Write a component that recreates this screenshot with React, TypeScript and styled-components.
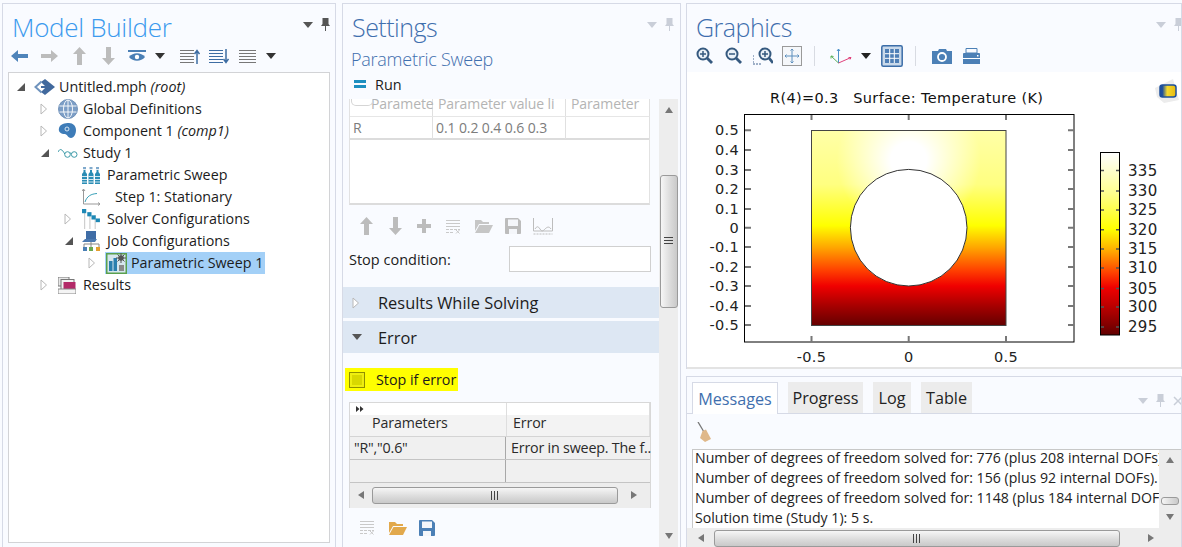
import React from "react";
import styled, { createGlobalStyle } from "styled-components";

const UI_FONT = `"Open Sans", "Noto Sans", "Liberation Sans", sans-serif`;
const PLOT_FONT = `"DejaVu Sans", sans-serif`;

const GlobalStyle = createGlobalStyle`
  html, body {
    margin: 0;
    padding: 0;
    width: 1182px;
    height: 547px;
    overflow: hidden;
    background: #f9fbff;
    font-family: ${UI_FONT};
  }
`;

const Page = styled.div`
  display: flex;
  width: 1182px;
  height: 547px;
  padding: 3px 0 0 2px;
  box-sizing: border-box;
  gap: 6px;
  overflow: hidden;
`;

const Panel = styled.section<{ $width: number }>`
  position: relative;
  width: ${(p) => p.$width}px;
  flex: none;
  display: flex;
  flex-direction: column;
  box-sizing: border-box;
  border: 1px solid #d6dae6;
  border-bottom: none;
  overflow: hidden;
`;

const RightColumn = styled.div`
  flex: 1;
  min-width: 0;
  margin-left: -1px;
  display: flex;
  flex-direction: column;
  gap: 7px;
`;

const Title = styled.h1<{ $active?: boolean }>`
  margin: 0;
  padding: 5px 0 0 9px;
  height: 36px;
  box-sizing: border-box;
  font-size: ${(p) => (p.$active ? 26 : 25)}px;
  line-height: 36px;
  font-weight: 300;
  letter-spacing: ${(p) => (p.$active ? -0.3 : -0.5)}px;
  white-space: nowrap;
  color: ${(p) => (p.$active ? "#3b9aee" : "#3f6fae")};
`;

const Corner = styled.div<{ $right: number; $top?: number }>`
  position: absolute;
  top: ${(p) => p.$top ?? 14}px;
  right: ${(p) => p.$right}px;
  display: flex;
  gap: 8px;
  align-items: center;
`;

const Toolbar = styled.div<{ $pad: number; $height?: number; $mt?: number }>`
  display: flex;
  align-items: center;
  height: ${(p) => p.$height ?? 24}px;
  margin-top: ${(p) => p.$mt ?? 0}px;
  padding-left: ${(p) => p.$pad}px;
  flex: none;
`;

const Tool = styled.span<{ $ml?: number }>`
  display: inline-flex;
  align-items: center;
  margin-left: ${(p) => p.$ml ?? 0}px;
`;

const Divider = styled.span<{ $ml: number }>`
  width: 1px;
  height: 20px;
  margin-left: ${(p) => p.$ml}px;
  background: #d8dbe2;
`;

const TreeBox = styled.div`
  margin: 0 5px;
  height: 471px;
  box-sizing: border-box;
  border: 1px solid #d2d3d6;
  background: #fff;
  padding-top: 3px;
`;

const TreeRow = styled.div<{ $level: number }>`
  display: flex;
  align-items: center;
  height: 22px;
  padding-left: ${(p) => 7 + p.$level * 24}px;
`;

const Expander = styled.span`
  width: 18px;
  flex: none;
  display: inline-flex;
  align-items: center;
`;

const NodeIcon = styled.span`
  width: 25px;
  flex: none;
  display: inline-flex;
  align-items: center;
`;

const NodeLabel = styled.span<{ $indent?: number }>`
  font-size: 14.3px;
  line-height: 22px;
  color: #1c1c1c;
  white-space: nowrap;
  margin-left: ${(p) => p.$indent ?? 0}px;
  em { font-style: italic; }
`;

const SelectedNode = styled.span`
  display: inline-flex;
  align-items: center;
  height: 22px;
  margin-left: -1px;
  padding-left: 1px;
  padding-right: 2px;
  background: #a3d0f7;
`;

const SubTitle = styled.div`
  font-size: 18px;
  line-height: 24px;
  letter-spacing: -0.25px;
  font-weight: 300;
  color: #3f6fae;
  padding-left: 8px;
  margin-top: 7px;
`;

const RunRow = styled.div`
  display: flex;
  align-items: center;
  gap: 9px;
  padding-left: 11px;
  height: 26px;
  font-size: 14.4px;
  color: #1c1c1c;
`;

const SettingsBody = styled.div`
  display: flex;
  flex: 1;
  min-height: 0;
  margin-top: 2px;
`;

const SettingsContent = styled.div`
  width: 316px;
  flex: none;
`;

const VScroll = styled.div<{ $width: number }>`
  width: ${(p) => p.$width}px;
  flex: none;
  background: #ededed;
  display: flex;
  flex-direction: column;
  align-items: center;
`;

const ScrollArrow = styled.span<{ $flex?: boolean; $h?: number; $w?: number }>`
  display: flex;
  align-items: center;
  justify-content: center;
  flex: ${(p) => (p.$flex ? 1 : "none")};
  height: ${(p) => (p.$h ? `${p.$h}px` : "auto")};
  width: ${(p) => (p.$w ? `${p.$w}px` : "100%")};
`;

const VThumb = styled.div<{ $h: number; $w: number; $mt: number }>`
  height: ${(p) => p.$h}px;
  width: ${(p) => p.$w}px;
  margin-top: ${(p) => p.$mt}px;
  flex: none;
  box-sizing: border-box;
  border: 1px solid #9a9a9a;
  border-radius: 3px;
  background: linear-gradient(to right, #f6f6f6, #dcdcdc 55%, #c9c9c9);
  display: flex;
  align-items: center;
  justify-content: center;
`;

const HScrollBar = styled.div<{ $height: number }>`
  display: flex;
  align-items: center;
  height: ${(p) => p.$height}px;
  background: #ededed;
  flex: none;
`;

const HThumb = styled.div<{ $w: number; $h: number }>`
  width: ${(p) => p.$w}px;
  height: ${(p) => p.$h}px;
  flex: none;
  box-sizing: border-box;
  border: 1px solid #9a9a9a;
  border-radius: 3px;
  background: linear-gradient(to bottom, #f6f6f6, #dcdcdc 55%, #c9c9c9);
  display: flex;
  align-items: center;
  justify-content: center;
`;

const Grip = styled.span<{ $vertical?: boolean }>`
  display: block;
  width: 9px;
  height: 9px;
  background: ${(p) =>
    p.$vertical
      ? "repeating-linear-gradient(to bottom, #444 0 1px, transparent 1px 3px)"
      : "repeating-linear-gradient(to right, #444 0 1px, transparent 1px 3px)"};
`;

const SweepTable = styled.div`
  position: relative;
  width: 301px;
  height: 106px;
  margin-left: 6px;
  box-sizing: border-box;
  border-left: 1px solid #e2e2e2;
  border-right: 1px solid #e2e2e2;
  border-bottom: 2px solid #dcdcdc;
  background: #fff;
`;

const SweepRow = styled.div<{ $head?: boolean }>`
  display: grid;
  grid-template-columns: 83px 133px 84px;
  height: ${(p) => (p.$head ? 18 : 23)}px;
  box-sizing: border-box;
  border-bottom: ${(p) => (p.$head ? "1px solid #e6e6e6" : "2px solid #dcdcdc")};
`;

const SweepCell = styled.div<{ $head?: boolean; $pad?: number }>`
  white-space: nowrap;
  box-sizing: border-box;
  border-right: 1px solid #e0e0e0;
  padding-left: ${(p) => p.$pad ?? (p.$head ? 5 : 3)}px;
  font-size: 14px;
  line-height: ${(p) => (p.$head ? 10 : 22)}px;
  letter-spacing: -0.1px;
  color: ${(p) => (p.$head ? "#b4b4b4" : "#7c7c7c")};
`;

const CutHeaderButton = styled.span`
  position: absolute;
  left: 1px;
  top: 0;
  width: 20px;
  height: 6px;
  border: 1px solid #d5d5d5;
  border-top: none;
  border-radius: 0 0 5px 5px;
  background: #fff;
`;

const StopRow = styled.div`
  display: flex;
  align-items: center;
  justify-content: space-between;
  margin: 8px 8px 0 6px;
  height: 26px;
  font-size: 14.5px;
  color: #1c1c1c;
`;

const StopInput = styled.div`
  width: 142px;
  height: 26px;
  box-sizing: border-box;
  border: 1px solid #d0d0d0;
  background: #fff;
`;

const SectionBar = styled.div<{ $mt: number; $h: number }>`
  display: flex;
  align-items: center;
  height: ${(p) => p.$h}px;
  margin-top: ${(p) => p.$mt}px;
  padding-left: 9px;
  background: #dde7f3;
  font-size: 16.4px;
  color: #1c1c1c;
`;

const SectionLabel = styled.span<{ $ml: number }>`
  margin-left: ${(p) => p.$ml}px;
`;

const Highlight = styled.label`
  display: inline-flex;
  align-items: center;
  gap: 11px;
  width: 113px;
  height: 23px;
  margin: 15px 0 0 2px;
  padding-left: 4px;
  box-sizing: border-box;
  background: #ffff00;
  font-size: 14.3px;
  white-space: nowrap;
  color: #1c1c1c;
`;

const CheckBox = styled.span`
  flex: none;
  width: 16px;
  height: 16px;
  box-sizing: border-box;
  border: 1px solid #8f8f00;
  background: #d8d800;
  box-shadow: inset 0 0 0 2px #eeee10;
`;

const ErrorTable = styled.div`
  width: 302px;
  margin: 9px 0 0 6px;
  box-sizing: border-box;
  border: 1px solid #d8d8d8;
  border-bottom: none;
`;

const ErrorHead = styled.div`
  display: grid;
  grid-template-columns: 157px 1fr;
  height: 34px;
  box-sizing: border-box;
  background: linear-gradient(to bottom, #fff 0 12px, #f3f3f3 12px);
  border-bottom: 1px solid #d4d4d4;
  position: relative;
`;

const ExpandMark = styled.span`
  position: absolute;
  left: 6px;
  top: 3px;
  display: inline-flex;
`;

const ErrorHeadCell = styled.div<{ $pad: number }>`
  padding: 10px 0 0 ${(p) => p.$pad}px;
  font-size: 14.2px;
  line-height: 20px;
  letter-spacing: -0.1px;
  color: #2a2a2a;
  border-right: 1px solid #dedede;
`;

const ErrorRow = styled.div`
  display: grid;
  grid-template-columns: 156px 1fr;
  height: 23px;
  box-sizing: border-box;
  background: #f0f0f0;
  border-bottom: 1px solid #c4c4c4;
`;

const ErrorCell = styled.div<{ $first?: boolean }>`
  white-space: nowrap;
  padding-left: ${(p) => (p.$first ? 4 : 5)}px;
  border-right: ${(p) => (p.$first ? "1px solid #a8a8a8" : "none")};
  font-size: 14.3px;
  line-height: 22px;
  letter-spacing: -0.2px;
  color: #2a2a2a;
`;

const GraphicsPanel = styled(Panel)`
  height: 366px;
  flex: none;
  width: 100%;
`;

const PlotArea = styled.div`
  flex: 1;
  background: #fff;
  border-bottom: 2px solid #e3e3e3;
`;

const PlotSvg = styled.svg`
  display: block;
  font-family: ${PLOT_FONT};
`;

const MessagesPanel = styled(Panel)`
  flex: 1;
  width: 100%;
`;

const TabStrip = styled.div`
  display: flex;
  gap: 10px;
  height: 37px;
  box-sizing: border-box;
  padding: 5px 0 0 5px;
  border-bottom: 1px solid #d6dae6;
  flex: none;
`;

const Tab = styled.div<{ $active?: boolean; $width: number }>`
  width: ${(p) => p.$width}px;
  height: ${(p) => (p.$active ? 32 : 31)}px;
  box-sizing: border-box;
  text-align: center;
  font-size: 16.2px;
  line-height: 32px;
  background: ${(p) => (p.$active ? "#fff" : "#ececec")};
  color: ${(p) => (p.$active ? "#3f6fae" : "#222")};
  border: ${(p) => (p.$active ? "1px solid #d6dae6" : "none")};
  border-bottom: none;
`;

const LogBody = styled.div`
  display: flex;
  height: 78px;
  margin-left: 5px;
  border-top: 1px solid #c8c8c8;
  border-left: 1px solid #c8c8c8;
  background: #fff;
  flex: none;
`;

const LogLines = styled.div`
  flex: 1;
  min-width: 0;
  overflow: hidden;
  padding-left: 2px;
`;

const LogLine = styled.div`
  position: relative;
  top: -2px;
  font-size: 14.15px;
  line-height: 20px;
  white-space: nowrap;
  color: #222;
`;

/* ---------- icons ---------- */

const ExpandedArrow = () => (
  <svg width="10" height="10" viewBox="0 0 10 10"><path d="M9 1V9H1Z" fill="#555" /></svg>
);
const CollapsedArrow = () => (
  <svg width="8" height="12" viewBox="0 0 8 12"><path d="M1 1L6.500 6L1 11Z" fill="#fff" stroke="#b8b8b8" /></svg>
);
const Caret = ({ color = "#555" }: { color?: string }) => (
  <svg width="10" height="6" viewBox="0 0 10 6"><path d="M0 0H10L5 6Z" fill={color} /></svg>
);
const Pin = ({ color = "#555" }: { color?: string }) => (
  <svg width="9" height="13" viewBox="0 0 9 13">
    <path d="M1.500 0H7.500V6L9 8H5V13H4V8H0L1.500 6Z" fill={color} />
  </svg>
);
const Close = ({ color = "#c9ced8" }: { color?: string }) => (
  <svg width="10" height="10" viewBox="0 0 10 10"><path d="M1 1L9 9M9 1L1 9" stroke={color} strokeWidth="1.500" /></svg>
);
const ArrowH = ({ color, flip }: { color: string; flip?: boolean }) => (
  <svg width="18" height="12" viewBox="0 0 18 12" style={flip ? { transform: "scaleX(-1)" } : undefined}>
    <path d="M0 6L7 0V4H17V8H7V12Z" fill={color} />
  </svg>
);
const ArrowV = ({ color, flip }: { color: string; flip?: boolean }) => (
  <svg width="13" height="18" viewBox="0 0 13 18" style={flip ? { transform: "scaleY(-1)" } : undefined}>
    <path d="M6.500 0L13 7H9V18H4V7H0Z" fill={color} />
  </svg>
);
const Plus = ({ color }: { color: string }) => (
  <svg width="14" height="14" viewBox="0 0 14 14"><path d="M5 0H9V5H14V9H9V14H5V9H0V5H5Z" fill={color} /></svg>
);
const ListClear = ({ color }: { color: string }) => (
  <svg width="16" height="15" viewBox="0 0 16 15" fill="none" stroke={color}>
    <path d="M1 1.500H15M1 4.500H15M1 7.500H15" />
    <path d="M1 10.500H15M1 13.500H9" strokeDasharray="3 1" />
    <path d="M11 11L14.500 14.500M14.500 11L11 14.500" />
  </svg>
);
const Folder = ({ color }: { color: string }) => (
  <svg width="18" height="14" viewBox="0 0 18 14">
    <path d="M0 1H6L8 3H14V5H4L0 12Z" fill={color} />
    <path d="M4.500 6H18L14 14H0Z" fill={color} />
  </svg>
);
const Save = ({ color }: { color: string }) => (
  <svg width="16" height="16" viewBox="0 0 16 16">
    <path d="M0 1C0 .5.5 0 1 0H13L16 3V15C16 15.500 15.500 16 15 16H1C.5 16 0 15.500 0 15Z" fill={color} />
    <rect x="3" y="1.500" width="10" height="6.500" fill="#f4f6fa" />
    <rect x="4" y="11" width="8" height="5" fill="#f4f6fa" />
  </svg>
);
const Waves = () => (
  <svg width="20" height="17" viewBox="0 0 20 17" fill="none" stroke="#bdbdbd">
    <path d="M.5 0V13H19.500V0" />
    <path d="M2 11C4 8 5 8 7 11S10 13 12 11 16 8 18 11" />
    <path d="M.5 16H19.500" strokeDasharray="2 1" />
  </svg>
);
const EyeIcon = () => (
  <svg width="18" height="13" viewBox="0 0 18 13">
    <rect y="0" width="18" height="2" fill="#4a7fb5" />
    <path d="M1 7C5 2 13 2 17 7C13 12 5 12 1 7Z" fill="#4a7fb5" />
    <circle cx="9" cy="7" r="2.200" fill="#fff" />
  </svg>
);
const ListIcon = ({ mark }: { mark?: "up" | "down" }) => (
  <svg width="20" height="15" viewBox="0 0 20 15" stroke={mark === "down" ? "#3d6da3" : "#777"} fill="none">
    <path d={mark ? "M0 1.500H14M0 4.500H14M0 7.500H14M0 10.500H14M0 13.500H14" : "M0 1.500H17M0 4.500H17M0 7.500H17M0 10.500H17M0 13.500H17"} />
    {mark === "up" && <path d="M17 15V2M14.500 5L17 1.500L19.500 5" stroke="#3d6da3" strokeWidth="1.500" />}
    {mark === "down" && <path d="M17 0V13M14.500 10L17 13.500L19.500 10" strokeWidth="1.500" />}
  </svg>
);
const RootIcon = () => (
  <svg width="22" height="16" viewBox="0 0 22 16" fill="none">
    <path d="M11 0L21 8L11 16L7 13L12 8L7 3Z" fill="#41699d" />
    <path d="M7.500 2.500L1.500 8L7.500 13.500" stroke="#6f93bd" strokeWidth="2" />
    <path d="M7 8H12" stroke="#41699d" strokeWidth="2" />
  </svg>
);
const GlobeIcon = () => (
  <svg width="20" height="20" viewBox="0 0 20 20" fill="none" stroke="#fff" strokeWidth=".9">
    <circle cx="10" cy="10" r="9.500" fill="#7c9ec6" stroke="#6a8cb6" />
    <ellipse cx="10" cy="10" rx="4.500" ry="9" />
    <path d="M10 1V19M1.500 7H18.500M1.500 13H18.500" />
  </svg>
);
const ComponentIcon = () => (
  <svg width="18" height="16" viewBox="0 0 18 16">
    <path d="M1 5C2 1 7 0 11 0C15 0 18 3 18 7C18 11 16 15 13 15C10 15 10 12 7 11C3 11 0 9 1 5Z" fill="#3e7cb8" />
    <circle cx="9" cy="6" r="2" fill="none" stroke="#d7e6f4" />
  </svg>
);
const GlassesIcon = () => (
  <svg width="20" height="10" viewBox="0 0 20 10" fill="none" stroke="#3d9aa8">
    <circle cx="9.500" cy="6.500" r="2.800" />
    <circle cx="16.200" cy="6.500" r="2.800" />
    <path d="M0 4C2 0 4 1 6.800 6" />
    <path d="M12 5.500Q12.800 4.500 13.600 5.500" />
  </svg>
);
const SweepIcon = () => (
  <svg width="18" height="17" viewBox="0 0 18 17">
    {[0, 6.500, 13].map((x, i) => (
      <g key={i}>
        <path d={`M${x + 1.5} 3H${x + 3.5}V5L${x + 5} 7V17H${x}V7L${x + 1.5} 5Z`} fill="#2a8db5" />
        <path d={`M${x} 9.500H${x + 5}M${x} 12.500H${x + 5}M${x} 15H${x + 5}`} stroke="#fff" strokeWidth=".8" />
        <rect x={x + 1} y="0" width="3" height="2.200" fill="#7fa9cc" />
      </g>
    ))}
  </svg>
);
const StationaryIcon = () => (
  <svg width="18" height="17" viewBox="0 0 18 17" fill="none">
    <path d="M1.500 0V15H18M0 2L1.500 0L3 2M16 13.500L18 15L16 16.500" stroke="#999" />
    <path d="M3 13C5 7 9 5 15 4.500" stroke="#39a0b8" />
  </svg>
);
const SolverIcon = () => (
  <svg width="19" height="20" viewBox="0 0 18 19">
    <path d="M2.500 0V19M7.500 3V19M12.500 6V19" stroke="#c9c9c9" />
    <rect x="0" y="0" width="4" height="4" fill="#1d88b5" />
    <rect x="5" y="3" width="4" height="4" fill="#1d88b5" />
    <rect x="9" y="6" width="4" height="4" fill="#1d88b5" />
    <rect x="13" y="9" width="4" height="3.500" fill="#1d88b5" />
  </svg>
);
const JobIcon = () => (
  <svg width="19" height="20" viewBox="0 0 19 20">
    <path d="M4 0H14V8H4Z" fill="#3f6da6" />
    <path d="M0 11L3 8H15L13 11Z" fill="#4b79b0" />
    <path d="M2 16V13H17V16M9 11V16" fill="none" stroke="#888" />
    <rect x="1" y="16" width="4" height="4" fill="#4a7fb5" />
    <rect x="7" y="16" width="4" height="4" fill="#6aa84f" />
    <rect x="14" y="16" width="4" height="4" fill="#e59f2e" />
  </svg>
);
const ParamSweepJobIcon = () => (
  <svg width="21" height="21" viewBox="0 0 21 21">
    <rect x=".75" y=".75" width="19.500" height="19.500" fill="#d5e6ee" stroke="#5aa04e" strokeWidth="1.500" />
    <rect x="3" y="8" width="3.500" height="10" fill="#2a7fae" />
    <rect x="7.500" y="5" width="3.500" height="13" fill="#2a7fae" />
    <circle cx="15" cy="5" r="2.800" fill="#555" />
    <path d="M15 0V10M10 5H20M11.500 1.500L18.500 8.500M18.500 1.500L11.500 8.500" stroke="#555" />
    <rect x="13" y="12" width="5" height="6" fill="#8a8a8a" />
  </svg>
);
const ResultsIcon = () => (
  <svg width="18" height="17" viewBox="0 0 18 17">
    <rect x="0" y="0" width="11" height="9" fill="#e8e8e8" stroke="#777" />
    <rect x="3" y="2.500" width="13" height="10" fill="#f2f2f2" stroke="#777" />
    <rect x="5.500" y="5" width="12" height="7" fill="#b32a68" />
    <path d="M0 12H18V17H0Z" fill="#f4f4f4" stroke="#888" />
  </svg>
);
const ZoomIcon = ({ kind }: { kind: "in" | "out" | "box" }) => (
  <svg width="20" height="18" viewBox="0 0 20 18" fill="none">
    {kind === "box" && <path d="M0 8V17H9" stroke="#44658f" strokeDasharray="2 1" />}
    <circle cx="8" cy="7" r="5.500" stroke="#35597f" strokeWidth="2" fill="#eaf1f8" transform={kind === "box" ? "translate(4 0)" : undefined} />
    <path d={kind === "box" ? "M16 11L20 16" : "M12 11L17 16"} stroke="#35597f" strokeWidth="2.800" />
    <g transform={kind === "box" ? "translate(4 0)" : undefined}>
      <path d="M5 7H11" stroke="#35597f" strokeWidth="1.500" />
      {kind !== "out" && <path d="M8 4V10" stroke="#35597f" strokeWidth="1.500" />}
    </g>
  </svg>
);
const FitIcon = () => (
  <svg width="20" height="20" viewBox="0 0 20 20" fill="none">
    <rect x=".5" y=".5" width="19" height="19" stroke="#9a9a9a" fill="#f5f7fa" />
    <path d="M10 3V17M3 10H17" stroke="#5d8fbd" />
    <path d="M8.500 4.500L10 3L11.500 4.500M8.500 15.500L10 17L11.500 15.500M4.500 8.500L3 10L4.500 11.500M15.500 8.500L17 10L15.500 11.500" stroke="#5d8fbd" />
  </svg>
);
const AxesIcon = () => (
  <svg width="22" height="17" viewBox="0 0 22 17" fill="none">
    <path d="M8.500 15V1M7 3L8.500 1L10 3" stroke="#4a90c8" />
    <path d="M8.500 15L21 9.500M18.500 9.500L21 9.500L20 11.500" stroke="#e0407a" />
    <path d="M8.500 15L1 8M1 10.500L1 8L3.500 8.500" stroke="#5ab05a" />
  </svg>
);
const GridToggle = () => (
  <svg width="22" height="22" viewBox="0 0 22 22">
    <rect x=".8" y=".8" width="20.400" height="20.400" rx="1.500" fill="#c9d9ea" stroke="#3b6da8" strokeWidth="1.500" />
    <rect x="4" y="4" width="14" height="14" fill="#4f7fb6" />
    <path d="M8.700 4V18M13.300 4V18M4 8.700H18M4 13.300H18" stroke="#fff" />
  </svg>
);
const Camera = () => (
  <svg width="20" height="15" viewBox="0 0 20 15">
    <path d="M0 2H6L7 0H14L15 2H20V15H0Z" fill="#4c80b6" />
    <circle cx="10" cy="8" r="4" fill="none" stroke="#fff" strokeWidth="1.800" />
  </svg>
);
const Printer = () => (
  <svg width="17" height="16" viewBox="0 0 17 16">
    <path d="M3 .5H14V5H3Z" fill="none" stroke="#4c80b6" />
    <path d="M1 5H16C16.500 5 17 5.500 17 6V16H0V6C0 5.500.5 5 1 5Z" fill="#4c80b6" />
    <rect x="0" y="10" width="17" height="1" fill="#fff" />
    <rect x="14" y="7" width="1.500" height="1.500" fill="#fff" />
  </svg>
);
const Broom = () => (
  <svg width="15" height="20" viewBox="0 0 15 20">
    <path d="M1 0L7 10" stroke="#777" strokeWidth="1.300" />
    <path d="M5.500 9L9 7.500L14 17L8 20L3 16Z" fill="#dfb88a" />
  </svg>
);
const Triangle = ({ dir, size = 8 }: { dir: "up" | "down" | "left" | "right"; size?: number }) => {
  const d = { up: "M4 1L8 7H0Z", down: "M0 1H8L4 7Z", left: "M7 0V8L1 4Z", right: "M1 0V8L7 4Z" }[dir];
  return <svg width={size} height={size} viewBox="0 0 8 8"><path d={d} fill="#777" /></svg>;
};

/* ---------- tree ---------- */

type Node = {
  level: number;
  open?: boolean;
  icon: React.ReactNode;
  label: React.ReactNode;
  indent?: number;
  leaf?: boolean;
  selected?: boolean;
};

const treeNodes: Node[] = [
  { level: 0, open: true, icon: <RootIcon />, label: <>Untitled.mph <em>(root)</em></> },
  { level: 1, icon: <GlobeIcon />, label: "Global Definitions" },
  { level: 1, icon: <ComponentIcon />, label: <>Component 1 <em>(comp1)</em></> },
  { level: 1, open: true, icon: <GlassesIcon />, label: "Study 1" },
  { level: 2, leaf: true, icon: <SweepIcon />, label: "Parametric Sweep" },
  { level: 2, leaf: true, icon: <StationaryIcon />, label: "Step 1: Stationary", indent: 8 },
  { level: 2, icon: <SolverIcon />, label: "Solver Configurations" },
  { level: 2, open: true, icon: <JobIcon />, label: "Job Configurations" },
  { level: 3, icon: <ParamSweepJobIcon />, label: "Parametric Sweep 1", selected: true },
  { level: 1, icon: <ResultsIcon />, label: "Results" },
];

const TreeNode = ({ node }: { node: Node }) => {
  const content = (
    <>
      <NodeIcon>{node.icon}</NodeIcon>
      <NodeLabel $indent={node.indent}>{node.label}</NodeLabel>
    </>
  );
  return (
    <TreeRow $level={node.level}>
      <Expander>
        {!node.leaf && (node.open ? <ExpandedArrow /> : <CollapsedArrow />)}
      </Expander>
      {node.selected ? <SelectedNode>{content}</SelectedNode> : content}
    </TreeRow>
  );
};

/* ---------- plot ---------- */

const yTicks = [
  ["0.5", 130.3], ["0.4", 150], ["0.3", 170], ["0.2", 189], ["0.1", 209], ["0", 227.7],
  ["-0.1", 247], ["-0.2", 267], ["-0.3", 286], ["-0.4", 306], ["-0.5", 325],
] as const;
const xTicks = [["-0.5", 811.5], ["0", 908.7], ["0.5", 1006]] as const;
const barTicks = [
  ["335", 170.5], ["330", 191], ["325", 210], ["320", 229.7], ["315", 249],
  ["310", 268], ["305", 288.6], ["300", 307], ["295", 327],
] as const;

const TICK = "#777";

const Plot = () => (
  <PlotSvg width="496" height="294" viewBox="687 72 496 294">
    <defs>
      <linearGradient id="heat" x1="0" y1="130" x2="0" y2="325" gradientUnits="userSpaceOnUse">
        <stop offset="0" stopColor="#ffffa8" />
        <stop offset="0.28" stopColor="#ffff80" />
        <stop offset="0.49" stopColor="#ffff00" />
        <stop offset="0.6" stopColor="#ffa800" />
        <stop offset="0.72" stopColor="#ff4000" />
        <stop offset="0.8" stopColor="#f00000" />
        <stop offset="0.9" stopColor="#a80000" />
        <stop offset="1" stopColor="#660000" />
      </linearGradient>
      <radialGradient id="glow" cx="908.700" cy="160" r="72" gradientUnits="userSpaceOnUse">
        <stop offset="0.25" stopColor="#fff" stopOpacity="1" />
        <stop offset="1" stopColor="#fff" stopOpacity="0" />
      </radialGradient>
      <linearGradient id="bar" x1="0" y1="0" x2="0" y2="1">
        <stop offset="0" stopColor="#ffffff" />
        <stop offset="0.22" stopColor="#ffff90" />
        <stop offset="0.42" stopColor="#ffff00" />
        <stop offset="0.54" stopColor="#ffa800" />
        <stop offset="0.66" stopColor="#ff4000" />
        <stop offset="0.74" stopColor="#f00000" />
        <stop offset="0.88" stopColor="#a80000" />
        <stop offset="1" stopColor="#600000" />
      </linearGradient>
      <linearGradient id="logo" x1="0" y1="0" x2="1" y2="0">
        <stop offset="0.15" stopColor="#1d4f9c" />
        <stop offset="0.45" stopColor="#f4d92c" />
        <stop offset="1" stopColor="#e8b90f" />
      </linearGradient>
    </defs>

    <text x="770" y="103" fontSize="14.5" letterSpacing="0.33" fill="#111" xmlSpace="preserve">R(4)=0.3   Surface: Temperature (K)</text>

    <rect x="744.500" y="114.500" width="329.500" height="227.500" fill="#fff" stroke="#000" />
    {yTicks.map(([label, y]) => (
      <g key={label}>
        <path d={`M745 ${y}H751M1068 ${y}H1074`} stroke={TICK} strokeWidth="2" />
        <text x="739" y={y + 5} fontSize="14.5" textAnchor="end" fill="#222" letterSpacing="0.3">{label}</text>
      </g>
    ))}
    {xTicks.map(([label, x]) => (
      <g key={label}>
        <path d={`M${x} 115V120M${x} 336V342`} stroke={TICK} strokeWidth="2" />
        <text x={x} y="362" fontSize="14.5" textAnchor="middle" fill="#222" letterSpacing="0.3">{label}</text>
      </g>
    ))}

    <rect x="811.500" y="130.500" width="194.500" height="195" fill="url(#heat)" />
    <rect x="811.500" y="130.500" width="194.500" height="195" fill="url(#glow)" />
    <rect x="811.500" y="130.500" width="194.500" height="195" fill="none" stroke="#444" />
    <circle cx="908.700" cy="227.700" r="58.300" fill="#fff" stroke="#333" />

    <rect x="1100.500" y="152.500" width="19" height="182.500" fill="url(#bar)" stroke="#000" />
    {barTicks.map(([label, y]) => (
      <g key={label}>
        <path d={`M1101 ${y}H1104M1116 ${y}H1119`} stroke="#555" strokeWidth="1.500" />
        <text x="1128" y={y + 5} fontSize="15" fill="#222" letterSpacing="0.3">{label}</text>
      </g>
    ))}

    <path d="M1155 88L1173 79L1179 100L1164 103L1157 97Z" fill="#ececec" />
    <rect x="1160" y="85" width="16" height="12" rx="2.500" fill="url(#logo)" stroke="#1d4f9c" strokeWidth="1.500" />
  </PlotSvg>
);

/* ---------- page ---------- */

export default function App() {
  return (
    <>
      <GlobalStyle />
      <Page>
        <Panel $width={334}>
          <Title $active>Model Builder</Title>
          <Corner $right={5}>
            <Caret color="#555" />
            <Pin color="#555" />
          </Corner>
          <Toolbar $pad={8} $height={32}>
            <Tool><ArrowH color="#4f84ba" /></Tool>
            <Tool $ml={11}><ArrowH color="#bcbcbc" flip /></Tool>
            <Tool $ml={15}><ArrowV color="#bcbcbc" /></Tool>
            <Tool $ml={16}><ArrowV color="#bcbcbc" flip /></Tool>
            <Tool $ml={13}><EyeIcon /></Tool>
            <Tool $ml={9}><Caret color="#333" /></Tool>
            <Tool $ml={15}><ListIcon mark="up" /></Tool>
            <Tool $ml={9}><ListIcon mark="down" /></Tool>
            <Tool $ml={10}><ListIcon /></Tool>
            <Tool $ml={7}><Caret color="#333" /></Tool>
          </Toolbar>
          <TreeBox>
            {treeNodes.map((node, i) => <TreeNode key={i} node={node} />)}
          </TreeBox>
        </Panel>

        <Panel $width={339}>
          <Title>Settings</Title>
          <Corner $right={6}>
            <Caret color="#c9ced8" />
            <Pin color="#c9ced8" />
          </Corner>
          <SubTitle>Parametric Sweep</SubTitle>
          <RunRow>
            <svg width="12" height="8" viewBox="0 0 12 8">
              <rect width="12" height="3" fill="#1d8fc0" />
              <rect y="5" width="12" height="3" fill="#1d8fc0" />
            </svg>
            Run
          </RunRow>
          <SettingsBody>
            <SettingsContent>
              <SweepTable>
                <CutHeaderButton />
                <SweepRow $head>
                  <SweepCell $head $pad={21}>Paramete</SweepCell>
                  <SweepCell $head>Parameter value li</SweepCell>
                  <SweepCell $head>Parameter</SweepCell>
                </SweepRow>
                <SweepRow>
                  <SweepCell>R</SweepCell>
                  <SweepCell>0.1 0.2 0.4 0.6 0.3</SweepCell>
                  <SweepCell />
                </SweepRow>
              </SweepTable>
              <Toolbar $pad={17} $height={24} $mt={9}>
                <Tool><ArrowV color="#bcbcbc" /></Tool>
                <Tool $ml={16}><ArrowV color="#bcbcbc" flip /></Tool>
                <Tool $ml={15}><Plus color="#bcbcbc" /></Tool>
                <Tool $ml={14}><ListClear color="#c9c9c9" /></Tool>
                <Tool $ml={14}><Folder color="#c6c6c6" /></Tool>
                <Tool $ml={12}><Save color="#bcbcbc" /></Tool>
                <Tool $ml={12}><Waves /></Tool>
              </Toolbar>
              <StopRow>
                Stop condition:
                <StopInput />
              </StopRow>
              <SectionBar $mt={15} $h={31}>
                <CollapsedArrow />
                <SectionLabel $ml={18}>Results While Solving</SectionLabel>
              </SectionBar>
              <SectionBar $mt={3} $h={32}>
                <Caret color="#555" />
                <SectionLabel $ml={16}>Error</SectionLabel>
              </SectionBar>
              <Highlight>
                <CheckBox />
                Stop if error
              </Highlight>
              <ErrorTable>
                <ErrorHead>
                  <ExpandMark>
                    <svg width="8" height="6" viewBox="0 0 8 6">
                      <path d="M0 0L3.500 3L0 6ZM4 0L7.500 3L4 6Z" fill="#333" />
                    </svg>
                  </ExpandMark>
                  <ErrorHeadCell $pad={22}>Parameters</ErrorHeadCell>
                  <ErrorHeadCell $pad={6}>Error</ErrorHeadCell>
                </ErrorHead>
                <ErrorRow>
                  <ErrorCell $first>"R","0.6"</ErrorCell>
                  <ErrorCell>Error in sweep. The f..</ErrorCell>
                </ErrorRow>
                <ErrorRow>
                  <ErrorCell $first />
                  <ErrorCell />
                </ErrorRow>
                <HScrollBar $height={25}>
                  <ScrollArrow $w={22}><Triangle dir="left" /></ScrollArrow>
                  <HThumb $w={246} $h={17}><Grip /></HThumb>
                  <ScrollArrow $flex><Triangle dir="right" /></ScrollArrow>
                </HScrollBar>
              </ErrorTable>
              <Toolbar $pad={16} $height={24} $mt={8}>
                <Tool><ListClear color="#c9c9c9" /></Tool>
                <Tool $ml={14}><Folder color="#e2a94c" /></Tool>
                <Tool $ml={12}><Save color="#4c80b6" /></Tool>
              </Toolbar>
            </SettingsContent>
            <VScroll $width={19}>
              <ScrollArrow $h={22}><Triangle dir="up" /></ScrollArrow>
              <VThumb $h={133} $w={18} $mt={54}><Grip $vertical /></VThumb>
              <ScrollArrow $flex />
              <ScrollArrow $h={22}><Triangle dir="down" /></ScrollArrow>
            </VScroll>
          </SettingsBody>
        </Panel>

        <RightColumn>
          <GraphicsPanel $width={496}>
            <Title>Graphics</Title>
            <Corner $right={-2}>
              <Caret color="#c9ced8" />
              <Pin color="#c9ced8" />
            </Corner>
            <Toolbar $pad={8} $height={32}>
              <Tool><ZoomIcon kind="in" /></Tool>
              <Tool $ml={9}><ZoomIcon kind="out" /></Tool>
              <Tool $ml={9}><ZoomIcon kind="box" /></Tool>
              <Tool $ml={9}><FitIcon /></Tool>
              <Divider $ml={12} />
              <Tool $ml={15}><AxesIcon /></Tool>
              <Tool $ml={9}><Caret color="#222" /></Tool>
              <Tool $ml={10}><GridToggle /></Tool>
              <Divider $ml={12} />
              <Tool $ml={16}><Camera /></Tool>
              <Tool $ml={11}><Printer /></Tool>
            </Toolbar>
            <PlotArea><Plot /></PlotArea>
          </GraphicsPanel>

          <MessagesPanel $width={496}>
            <TabStrip>
              <Tab $active $width={86}>Messages</Tab>
              <Tab $width={75}>Progress</Tab>
              <Tab $width={38}>Log</Tab>
              <Tab $width={51}>Table</Tab>
            </TabStrip>
            <Corner $right={-2} $top={17}>
              <Caret color="#c9ced8" />
              <Pin color="#c9ced8" />
              <Close />
            </Corner>
            <Toolbar $pad={10} $height={35}><Broom /></Toolbar>
            <LogBody>
              <LogLines>
                <LogLine>Number of degrees of freedom solved for: 776 (plus 208 internal DOFs).</LogLine>
                <LogLine>Number of degrees of freedom solved for: 156 (plus 92 internal DOFs).</LogLine>
                <LogLine>Number of degrees of freedom solved for: 1148 (plus 184 internal DOFs).</LogLine>
                <LogLine>Solution time (Study 1): 5 s.</LogLine>
              </LogLines>
              <VScroll $width={22}>
                <ScrollArrow $h={20}><Triangle dir="up" /></ScrollArrow>
                <VThumb $h={8} $w={18} $mt={27} />
                <ScrollArrow $flex><Triangle dir="down" /></ScrollArrow>
              </VScroll>
            </LogBody>
            <HScrollBar $height={20}>
              <ScrollArrow $w={27}><Triangle dir="left" /></ScrollArrow>
              <HThumb $w={406} $h={17}><Grip /></HThumb>
              <ScrollArrow $flex><Triangle dir="right" /></ScrollArrow>
            </HScrollBar>
          </MessagesPanel>
        </RightColumn>
      </Page>
    </>
  );
}
